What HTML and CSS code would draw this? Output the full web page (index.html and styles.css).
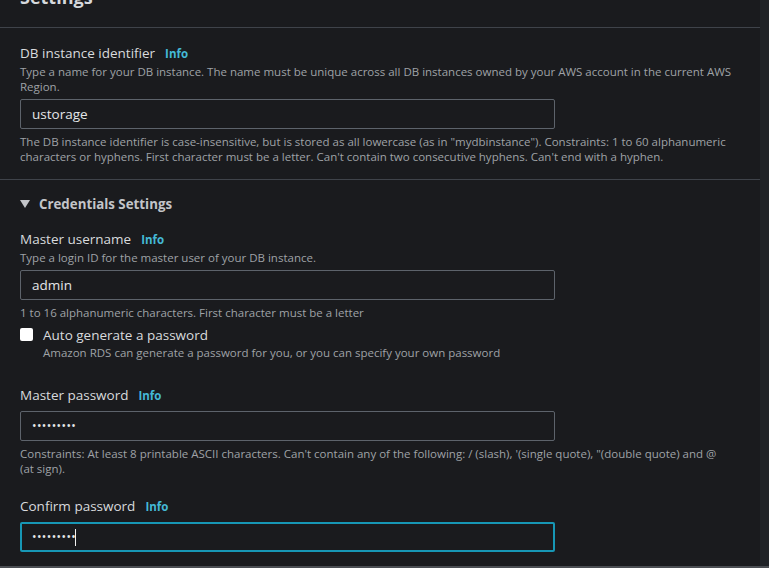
FILE: index.html
```html
<!DOCTYPE html>
<html lang="en">
<head>
<meta charset="utf-8">
<title>Settings</title>
<link rel="stylesheet" href="styles.css">
</head>
<body>
<div class="page">
  <main class="panel">
    <header class="panel-head"><h2 class="panel-title">Settings</h2></header>

    <section class="section first">
      <div class="label-row"><span class="label">DB instance identifier</span><a class="info">Info</a></div>
      <p class="desc">Type a name for your DB instance. The name must be unique across all DB instances owned by your AWS account in the current AWS<br>Region.</p>
      <div class="input">ustorage</div>
      <p class="desc hint">The DB instance identifier is case-insensitive, but is stored as all lowercase (as in "mydbinstance"). Constraints: 1 to 60 alphanumeric<br>characters or hyphens. First character must be a letter. Can't contain two consecutive hyphens. Can't end with a hyphen.</p>
    </section>

    <section class="section creds">
      <div class="expander"><span class="caret"></span>Credentials Settings</div>

      <div class="field user">
        <div class="label-row"><span class="label">Master username</span><a class="info">Info</a></div>
        <p class="desc">Type a login ID for the master user of your DB instance.</p>
        <div class="input">admin</div>
        <p class="desc hint">1 to 16 alphanumeric characters. First character must be a letter</p>
      </div>

      <div class="check-row">
        <span class="checkbox"></span>
        <div class="check-text">
          <div class="check-label">Auto generate a password</div>
          <p class="desc">Amazon RDS can generate a password for you, or you can specify your own password</p>
        </div>
      </div>

      <div class="field pass">
        <div class="label-row"><span class="label">Master password</span><a class="info">Info</a></div>
        <div class="input input-tight"><span class="dots">•••••••••</span></div>
        <p class="desc hint">Constraints: At least 8 printable ASCII characters. Can't contain any of the following: / (slash), '(single quote), "(double quote) and @<br>(at sign).</p>
      </div>

      <div class="field confirm">
        <div class="label-row"><span class="label">Confirm password</span><a class="info">Info</a></div>
        <div class="input input-tight focused"><span class="dots">•••••••••</span><span class="cursor"></span></div>
      </div>
    </section>
  </main>
  <aside class="rail"></aside>
</div>
<div class="bottom-bar"></div>
</body>
</html>
```

FILE: styles.css
```css
html, body {
  margin: 0;
  padding: 0;
}
body {
  background: #1a1b1e;
  color: #d5d8dc;
  font-family: "Open Sans", "Noto Sans", sans-serif;
  height: 568px;
  overflow: hidden;
}
.page {
  display: flex;
  height: 566px;
}
.panel {
  width: 760px;
  overflow: hidden;
}
.rail {
  flex: 1;
  background: #202327;
}
.bottom-bar {
  height: 2px;
  background: #4b4e53;
}
.panel-head {
  height: 27px;
  border-bottom: 1px solid #3f434a;
  padding: 0 20px;
  overflow: hidden;
}
.panel-title {
  margin: -15px 0 0;
  font-size: 18px;
  line-height: 24px;
  font-weight: 700;
  color: #d5d8dc;
}
.section {
  padding: 0 20px;
}
.section.first {
  padding-top: 15px;
  padding-bottom: 15px;
  border-bottom: 1px solid #3f434a;
}
.section.creds {
  padding-top: 14px;
}
.label-row {
  display: flex;
  align-items: center;
  gap: 10px;
  height: 20px;
  line-height: 20px;
}
.label {
  font-size: 13.5px;
  color: #d8dadd;
}
.info {
  font-size: 11.5px;
  font-weight: 700;
  color: #44b9d6;
  padding-top: 1px;
}
.desc {
  margin: 1px 0 0;
  font-size: 11.5px;
  line-height: 15px;
  height: auto;
  color: #9fa2a6;
  white-space: nowrap;
}
.desc.hint {
  margin-top: 5px;
}
.input {
  box-sizing: border-box;
  width: 535px;
  height: 30px;
  margin-top: 5px;
  border: 1px solid #5d636b;
  border-radius: 2px;
  padding: 0 11px;
  font-size: 13.5px;
  line-height: 28px;
  color: #e4e6e8;
  display: flex;
  align-items: center;
}
.input-tight {
  margin-top: 6px;
}
.input.focused {
  border: 2px solid #1797b5;
  padding: 0 10px;
}
.dots {
  font-size: 12px;
  letter-spacing: 0.4px;
  color: #e4e6e8;
}
.cursor {
  width: 1px;
  height: 17px;
  background: #f2f2f2;
  margin-left: -1px;
}
.expander {
  display: flex;
  align-items: center;
  height: 20px;
  font-size: 13.3px;
  line-height: 20px;
  font-weight: 700;
  color: #c3c5c9;
}
.caret {
  width: 0;
  height: 0;
  border-left: 5px solid transparent;
  border-right: 5px solid transparent;
  border-top: 8px solid #c3c5c9;
  margin-right: 9px;
}
.field.user {
  margin-top: 15px;
}
.check-row {
  display: flex;
  gap: 10px;
  margin-top: 5px;
}
.checkbox {
  width: 13px;
  height: 13px;
  background: #ffffff;
  border-radius: 2px;
  margin-top: 3px;
  flex: none;
}
.check-label {
  font-size: 13.5px;
  line-height: 20px;
  height: 20px;
  color: #d8dadd;
}
.check-text .desc {
  margin-top: 0;
}
.field.pass {
  margin-top: 25px;
}
.field.confirm {
  margin-top: 20px;
}
```
